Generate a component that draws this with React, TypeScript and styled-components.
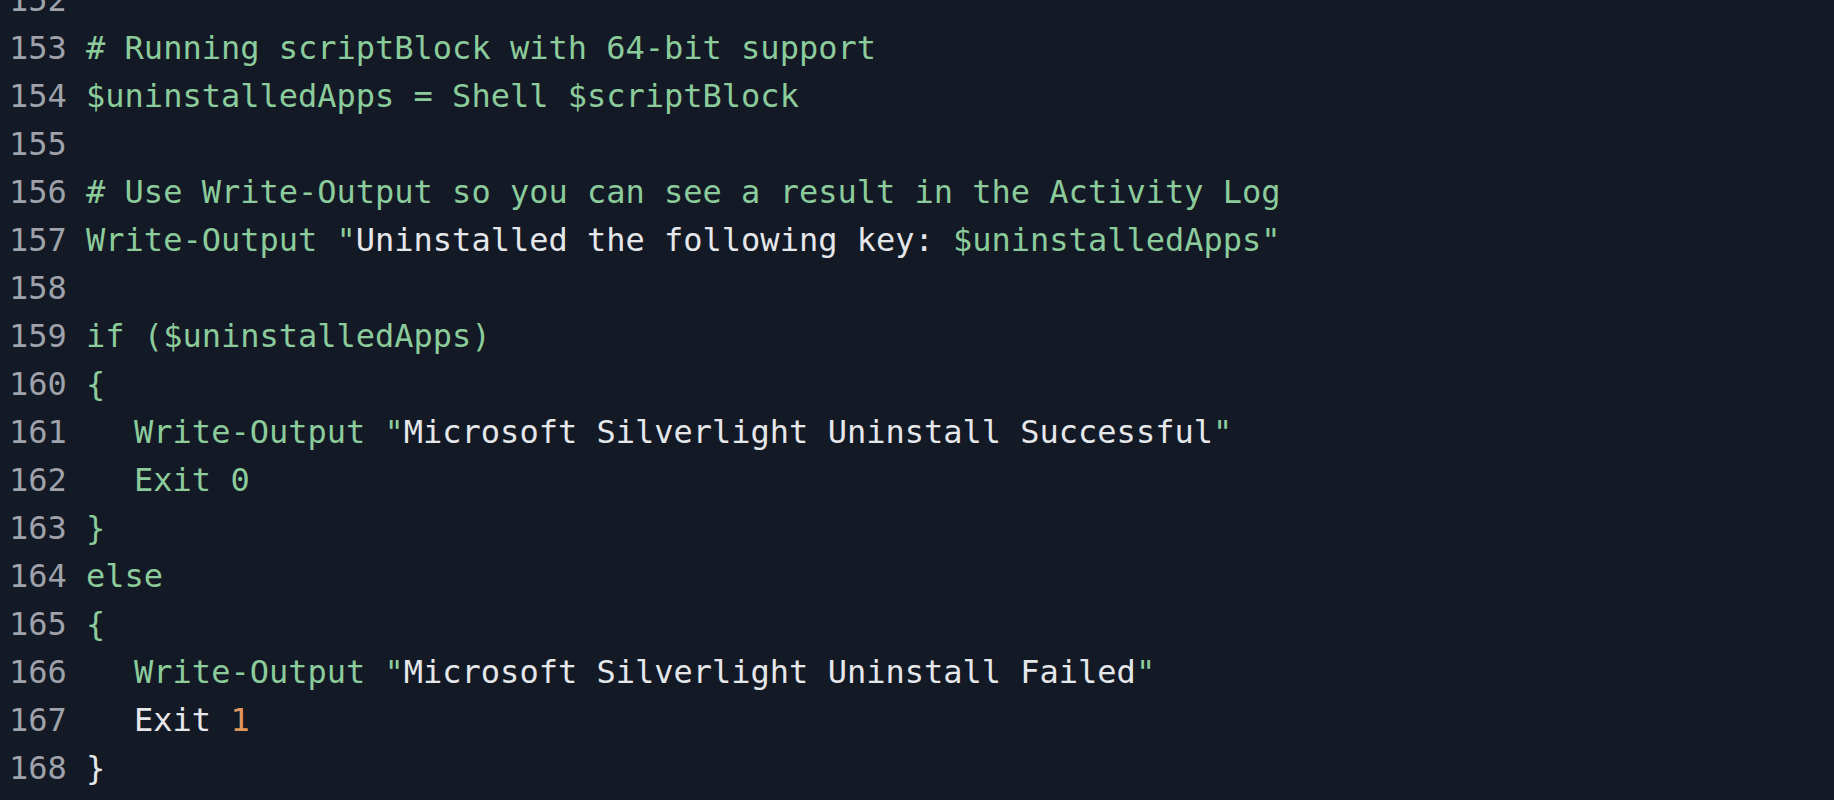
import React from "react";
import styled, { createGlobalStyle } from "styled-components";

const Global = createGlobalStyle`
  html, body {
    margin: 0;
    padding: 0;
    background: #131a26;
    overflow: hidden;
  }
`;

const Editor = styled.div`
  width: 1834px;
  height: 800px;
  background: #131a26;
  overflow: hidden;
  font-family: "DejaVu Sans Mono", "Liberation Mono", monospace;
  font-size: 32px;
  line-height: 48px;
`;

const Lines = styled.div`
  display: flex;
  flex-direction: column;
  margin-top: -24px;
  padding-left: 9px;
`;

const Row = styled.div`
  display: flex;
  gap: 1ch;
  white-space: pre;
  height: 48px;
`;

const Num = styled.span`
  width: 3ch;
  color: #9fa2aa;
`;

const Code = styled.span`
  color: #8ccb9b;
`;

const Indent = styled.span`
  display: inline-block;
  width: 48px;
`;

const Str = styled.span`
  color: #e6e7eb;
`;

const NumLit = styled.span`
  color: #e0975d;
`;

type Line = { n: number; content: React.ReactNode };

const lines: Line[] = [
  { n: 152, content: "" },
  { n: 153, content: "# Running scriptBlock with 64-bit support" },
  { n: 154, content: "$uninstalledApps = Shell $scriptBlock" },
  { n: 155, content: "" },
  { n: 156, content: "# Use Write-Output so you can see a result in the Activity Log" },
  {
    n: 157,
    content: (
      <>
        Write-Output "<Str>Uninstalled the following key: </Str>$uninstalledApps"
      </>
    ),
  },
  { n: 158, content: "" },
  { n: 159, content: "if ($uninstalledApps)" },
  { n: 160, content: "{" },
  {
    n: 161,
    content: (
      <>
        <Indent />
        Write-Output "<Str>Microsoft Silverlight Uninstall Successful</Str>"
      </>
    ),
  },
  {
    n: 162,
    content: (
      <>
        <Indent />
        Exit 0
      </>
    ),
  },
  { n: 163, content: "}" },
  { n: 164, content: "else" },
  { n: 165, content: "{" },
  {
    n: 166,
    content: (
      <>
        <Indent />
        Write-Output "<Str>Microsoft Silverlight Uninstall Failed</Str>"
      </>
    ),
  },
  {
    n: 167,
    content: (
      <>
        <Indent />
        <Str>Exit </Str>
        <NumLit>1</NumLit>
      </>
    ),
  },
  { n: 168, content: <Str>{"}"}</Str> },
];

export default function App() {
  return (
    <>
      <Global />
      <Editor>
        <Lines>
          {lines.map((l) => (
            <Row key={l.n}>
              <Num>{l.n}</Num>
              <Code>{l.content}</Code>
            </Row>
          ))}
        </Lines>
      </Editor>
    </>
  );
}
